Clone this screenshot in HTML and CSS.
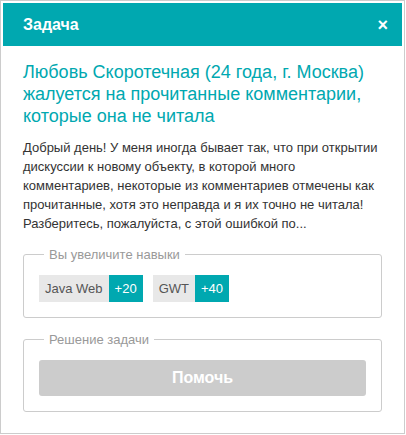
FILE: index.html
```html
<!DOCTYPE html>
<html lang="ru">
<head>
  <meta charset="UTF-8">
  <title>Задача</title>
  <link rel="stylesheet" href="styles.css">
</head>
<body>
  <div class="dialog">
    <div class="header">
      <span class="header-title">Задача</span>
      <span class="close">×</span>
    </div>

    <div class="content">
      <h2 class="task-title">Любовь Скоротечная (24 года, г. Москва) жалуется на прочитанные комментарии, которые она не читала</h2>

      <p class="task-text">Добрый день! У меня иногда бывает так, что при открытии дискуссии к новому объекту, в которой много комментариев, некоторые из комментариев отмечены как прочитанные, хотя это неправда и я их точно не читала! Разберитесь, пожалуйста, с этой ошибкой по...</p>

      <fieldset class="box">
        <legend>Вы увеличите навыки</legend>
        <div class="skills">
          <span class="skill"><span class="skill-name">Java Web</span><span class="skill-points">+20</span></span>
          <span class="skill"><span class="skill-name">GWT</span><span class="skill-points">+40</span></span>
        </div>
      </fieldset>

      <fieldset class="box">
        <legend>Решение задачи</legend>
        <button class="help-btn" disabled>Помочь</button>
      </fieldset>
    </div>
  </div>
</body>
</html>
```

FILE: styles.css
```css
body {
  margin: 0;
  font-family: "Liberation Sans", Arial, sans-serif;
  background: #fff;
}
.dialog {
  box-sizing: border-box;
  width: 405px;
  height: 434px;
  border: 1px solid #ccc;
  padding: 2px;
}
.header {
  height: 43px;
  background: #00a8b0;
  color: #fff;
  display: flex;
  align-items: center;
  justify-content: space-between;
  padding: 0 14px 0 20px;
}
.header-title {
  font-size: 16px;
  font-weight: bold;
}
.close {
  font-size: 18px;
  font-weight: bold;
  line-height: 1;
}
.content {
  padding: 15px 20px 0;
}
.task-title {
  margin: 0;
  font-size: 18px;
  font-weight: normal;
  line-height: 22px;
  color: #00a8b0;
}
.task-text {
  margin: 11px 0 0;
  font-size: 13px;
  line-height: 19px;
  color: #333;
}
.box {
  margin: 14px 0 0;
  padding: 13px 15px 15px;
  border: 1px solid #ccc;
  border-radius: 3px;
}
.box legend {
  margin-left: 5px;
  padding: 0 5px;
  font-size: 13px;
  color: #999;
}
.skills {
  display: flex;
  gap: 10px;
}
.skill {
  display: flex;
  font-size: 13px;
  line-height: 27px;
}
.skill-name {
  background: #e8e8e8;
  color: #555;
  padding: 0 6px;
}
.skill-points {
  background: #00a8b0;
  color: #fff;
  padding: 0 6px;
}
.help-btn {
  display: block;
  width: 100%;
  height: 36px;
  border: none;
  border-radius: 3px;
  background: #ccc;
  color: #fff;
  font-family: inherit;
  font-size: 16px;
  font-weight: bold;
}
```
